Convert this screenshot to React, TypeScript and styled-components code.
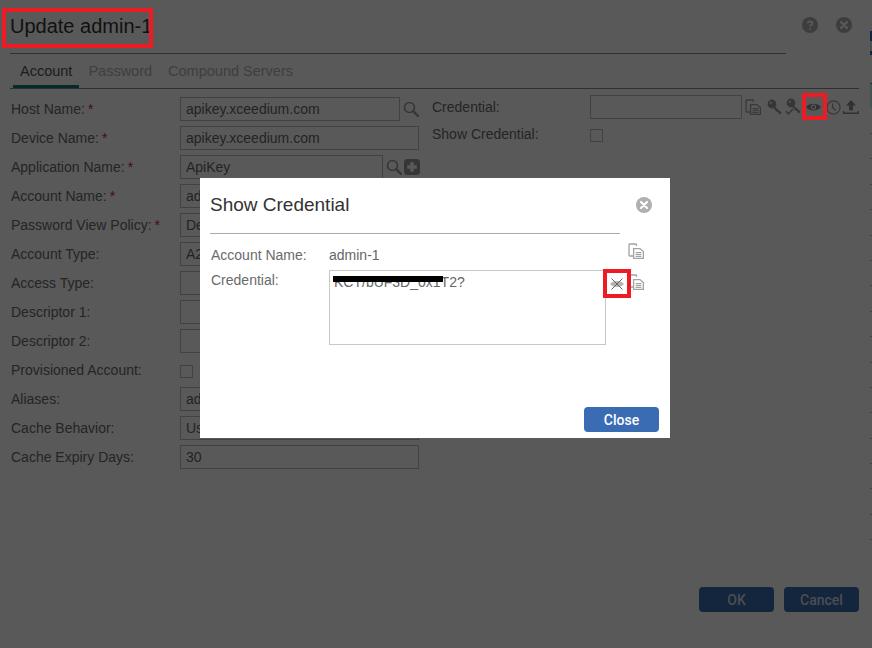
import React from 'react'
import styled, { createGlobalStyle } from 'styled-components'

const GlobalStyle = createGlobalStyle`
  html, body {
    margin: 0;
    padding: 0;
    background: #fff;
  }
  body {
    font-family: "Liberation Sans", Arial, sans-serif;
    font-size: 14px;
    color: #666;
  }
`

const Page = styled.div`
  position: relative;
  display: flex;
  width: 872px;
  height: 648px;
  overflow: hidden;
`

const Dialog = styled.div`
  display: flex;
  flex-direction: column;
  width: 870px;
  height: 648px;
  padding: 0 11px 36px 10px;
  box-sizing: border-box;
`

const EdgeStrip = styled.div`
  display: flex;
  flex-direction: column;
  width: 2px;
  padding-top: 31px;
  box-sizing: border-box;
`

const EdgeButton = styled.div`
  height: 24px;
  background: linear-gradient(#3a6cb3 0 10px, #d6dce6 10px 20px, #3a6cb3 20px);
`

const EdgeTab = styled.div`
  height: 25px;
  margin: 28px 0 25px;
  background: #c4f0ea;
  border-top: 1px solid #777;
  box-sizing: border-box;
`

const EdgeRow = styled.div`
  flex: 0 0 25.4px;
  border-top: 1px solid #c4c4c4;
  box-sizing: border-box;
`

const Header = styled.div`
  display: flex;
  height: 54px;
  flex: none;
`

const TitleBlock = styled.div`
  width: 776px;
  height: 54px;
  border-bottom: 1px solid #8a8a8a;
  box-sizing: border-box;
  padding-top: 15px;
`

const Title = styled.h1`
  position: relative;
  display: inline-block;
  margin: 0;
  font-size: 20px;
  line-height: 23px;
  font-weight: 400;
  color: #333;
`

const TitleMark = styled.span`
  position: absolute;
  left: -8px;
  top: -7px;
  width: 151px;
  height: 40px;
  border: 4px solid #ed1c24;
  box-sizing: border-box;
  z-index: 20;
`

const HeaderIcons = styled.div`
  display: flex;
  gap: 18px;
  margin-left: 16px;
  padding-top: 17px;
`

const TabBar = styled.div`
  display: flex;
  gap: 2px;
  flex: none;
  height: 35px;
  padding-left: 3px;
  border-bottom: 1px solid #8a8a8a;
  box-sizing: border-box;
`

const Tab = styled.div<{ $active?: boolean }>`
  height: 34px;
  padding: 9px 7px 0;
  box-sizing: border-box;
  font-size: 14.5px;
  line-height: 17px;
  color: ${props => props.$active ? '#555' : '#b4b4b4'};
  border-bottom: 3px solid ${props => props.$active ? '#0f7f7c' : 'transparent'};
`

const Columns = styled.div`
  display: flex;
`

const LeftColumn = styled.div`
  display: flex;
  flex-direction: column;
  gap: 5px;
  width: 425px;
  padding: 8px 0 0 1px;
  box-sizing: border-box;
`

const RightColumn = styled.div`
  display: flex;
  flex-direction: column;
  gap: 3px;
  padding-top: 6px;
`

const Row = styled.div`
  display: flex;
  align-items: center;
  height: 24px;
`

const Label = styled.label<{ $width: number }>`
  flex: none;
  width: ${props => props.$width}px;
  font-size: 14px;
  line-height: 16px;
  color: #6a6a6a;
`

const Star = styled.span`
  margin-left: 3px;
  color: #c0272d;
`

const TextField = styled.input<{ $width: number }>`
  flex: none;
  width: ${props => props.$width}px;
  height: 24px;
  padding: 0 5px;
  box-sizing: border-box;
  border: 1px solid #bdbdbd;
  border-radius: 0;
  outline: none;
  background: #fff;
  font-family: inherit;
  font-size: 14px;
  color: #666;
`

const CheckBox = styled.span`
  flex: none;
  width: 13px;
  height: 13px;
  margin-top: 3px;
  border: 1px solid #bdbdbd;
  box-sizing: border-box;
`

const IconGroup = styled.div`
  display: flex;
  align-items: center;
  gap: 2px;
  margin-left: 3px;
`

const EyeHolder = styled.span`
  position: relative;
  display: flex;
  margin: 0 3px;
`

const EyeMark = styled.span`
  position: absolute;
  left: -4px;
  top: -9px;
  width: 25px;
  height: 27px;
  border: 4px solid #ed1c24;
  box-sizing: border-box;
  z-index: 20;
`

const Footer = styled.div`
  display: flex;
  justify-content: flex-end;
  gap: 10px;
  margin-top: auto;
`

const Button = styled.button<{ $muted?: boolean }>`
  width: 75px;
  height: 25px;
  padding: 0;
  border: none;
  border-radius: 4px;
  background: #3a6cb3;
  font-family: Roboto, "Liberation Sans", sans-serif;
  font-size: 14px;
  font-weight: 500;
  color: ${props => props.$muted ? '#d6dce6' : '#fff'};
`

const Overlay = styled.div`
  position: absolute;
  inset: 0;
  z-index: 10;
  padding: 178px 0 0 200px;
  box-sizing: border-box;
  background: rgba(0, 0, 0, 0.65);
`

const Modal = styled.div`
  display: flex;
  flex-direction: column;
  width: 470px;
  height: 260px;
  padding: 0 11px 6px 10px;
  box-sizing: border-box;
  background: #fff;
`

const ModalHeader = styled.div`
  display: flex;
  align-items: flex-start;
  flex: none;
  height: 56px;
`

const ModalTitleBlock = styled.div`
  width: 410px;
  height: 56px;
  padding-top: 16px;
  box-sizing: border-box;
  border-bottom: 1px solid #aaa;
`

const ModalTitle = styled.h2`
  margin: 0;
  font-size: 19px;
  line-height: 22px;
  font-weight: 400;
  color: #333;
`

const ModalClose = styled.span`
  display: flex;
  margin: 19px 0 0 16px;
`

const ModalGrid = styled.div`
  display: grid;
  grid-template-columns: 118px 277px auto;
  grid-template-rows: 24px 75px;
  row-gap: 0;
  margin: 9px 0 0 1px;
`

const ModalLabel = styled.div<{ $top?: boolean }>`
  font-size: 14px;
  line-height: 16px;
  color: #6a6a6a;
  padding-top: ${props => props.$top ? '5px' : '4px'};
`

const ModalValue = styled.div`
  font-size: 14px;
  line-height: 16px;
  padding-top: 4px;
  color: #666;
`

const CopyCell = styled.div`
  display: flex;
  justify-content: flex-end;
  width: 38px;
`

const TextBox = styled.div`
  position: relative;
  height: 75px;
  margin-top: 3px;
  padding: 3px 4px;
  box-sizing: border-box;
  border: 1px solid #c8c8c8;
  font-size: 14px;
  line-height: 16px;
  color: #666;
`

const Redaction = styled.span`
  position: absolute;
  left: 3px;
  top: 5px;
  width: 110px;
  height: 6px;
  background: #000;
`

const CredentialActions = styled.div`
  position: relative;
  display: flex;
  justify-content: flex-end;
  width: 38px;
  height: 20px;
  margin-top: 7px;
`

const CrossMark = styled.span`
  position: absolute;
  left: -3px;
  top: -5px;
  display: flex;
  align-items: center;
  justify-content: center;
  width: 28px;
  height: 29px;
  border: 4px solid #ed1c24;
  box-sizing: border-box;
  background: #fff;
`

const ModalFooter = styled.div`
  display: flex;
  justify-content: flex-end;
  margin-top: auto;
`

const Glyph = styled.svg`
  display: block;
  flex: none;
`

const SearchIcon = () => (
  <Glyph width="16" height="16" viewBox="0 0 16 16">
    <circle cx="6.5" cy="6.5" r="5" fill="none" stroke="#9a9a9a" strokeWidth="1.6" />
    <path d="M10.2 10.2 15 15" stroke="#9a9a9a" strokeWidth="2.4" strokeLinecap="round" />
  </Glyph>
)

const PlusIcon = () => (
  <Glyph width="16" height="16" viewBox="0 0 16 16">
    <rect width="16" height="16" rx="3.5" fill="#9a9a9a" />
    <path d="M8 3.2v9.6M3.2 8h9.6" stroke="#fff" strokeWidth="3.4" />
  </Glyph>
)

const RoundIcon = ({ mark }: { mark: 'help' | 'close' }) => (
  <Glyph width="16" height="16" viewBox="0 0 16 16">
    <circle cx="8" cy="8" r="8" fill="#b0b0b0" />
    {mark === 'close' && <path d="M5 5l6 6M11 5l-6 6" stroke="#fff" strokeWidth="2.2" strokeLinecap="round" />}
    {mark === 'help' && <path d="M5.6 6.2C5.8 3.8 10.4 3.7 10.4 6.2 10.4 7.9 8 7.9 8 9.6M8 11.2v1.8" fill="none" stroke="#fff" strokeWidth="1.8" />}
  </Glyph>
)

const CopyIcon = () => (
  <Glyph width="16" height="16" viewBox="0 0 16 16">
    <path d="M8.5 3V1.8a.8.8 0 0 0-.8-.8H1.8a.8.8 0 0 0-.8.8v10.4a.8.8 0 0 0 .8.8H5" fill="none" stroke="#a3a3a3" strokeWidth="1.3" />
    <path d="M5.6 5.6H12l3.4 3V15.4H5.6Z" fill="#fff" stroke="#a3a3a3" strokeWidth="1.3" />
    <path d="M7.6 9.6h5.8M7.6 11.6h5.8M7.6 13.5h5.8" stroke="#a3a3a3" strokeWidth="1.1" />
  </Glyph>
)

const KeyIcon = () => (
  <Glyph width="16" height="16" viewBox="0 0 16 16">
    <circle cx="5" cy="5" r="4.4" fill="#9a9a9a" />
    <path d="M6 6l8.4 7.6-.6 1.6-2-.6-1-1.6-1.4-.4L5 7.5Z" fill="#9a9a9a" />
    <circle cx="3.8" cy="3.8" r="1" fill="#fff" />
  </Glyph>
)

const KeyCheckIcon = () => (
  <Glyph width="16" height="18" viewBox="0 0 16 18">
    <circle cx="6" cy="5" r="4.4" fill="#9a9a9a" />
    <path d="M7 6l8.4 7.6-.6 1.6-2-.6-1-1.6-1.4-.4L6 7.5Z" fill="#9a9a9a" />
    <circle cx="4.8" cy="3.8" r="1" fill="#fff" />
    <path d="M1 13.2l2.4 2.6L8 11" fill="none" stroke="#9a9a9a" strokeWidth="1.6" />
  </Glyph>
)

const EyeIcon = () => (
  <Glyph width="15" height="10" viewBox="0 0 15 10">
    <path d="M0 5C3 .5 12 .5 15 5 12 9.5 3 9.5 0 5Z" fill="#8c8c8c" />
    <circle cx="7.5" cy="5" r="2.6" fill="#fff" />
    <circle cx="7.5" cy="5" r="1.5" fill="#8c8c8c" />
  </Glyph>
)

const ClockIcon = () => (
  <Glyph width="15" height="15" viewBox="0 0 15 15">
    <circle cx="7.5" cy="7.5" r="6.6" fill="none" stroke="#9a9a9a" strokeWidth="1.2" />
    <path d="M6.6 3.4v4.4l3.4 2.4" fill="none" stroke="#9a9a9a" strokeWidth="1.2" />
  </Glyph>
)

const UploadIcon = () => (
  <Glyph width="16" height="15" viewBox="0 0 16 15">
    <path d="M8 0l5 5.4H10V10.4H6V5.4H3Z" fill="#8c8c8c" />
    <path d="M0 11v3h16v-3h-1.4v1.6H1.4V11Z" fill="#8c8c8c" />
  </Glyph>
)

const CrossedEyeIcon = () => (
  <Glyph width="16" height="14" viewBox="0 0 16 14">
    <path d="M1 7C4 3 12 3 15 7 12 11 4 11 1 7Z" fill="#b4b4b4" />
    <path d="M2.5 1.5l11 11M13.5 1.5l-11 11" stroke="#666" strokeWidth="1" />
  </Glyph>
)

interface IFormRow {
  label: string,
  required?: boolean,
  value?: string,
  width?: number,
  check?: boolean,
  icons?: Array<React.ReactNode>
}

const formRows: Array<IFormRow> = [
  { label: 'Host Name:', required: true, value: 'apikey.xceedium.com', width: 220, icons: [<SearchIcon key="s" />] },
  { label: 'Device Name:', required: true, value: 'apikey.xceedium.com', width: 239 },
  { label: 'Application Name:', required: true, value: 'ApiKey', width: 203, icons: [<SearchIcon key="s" />, <PlusIcon key="p" />] },
  { label: 'Account Name:', required: true, value: 'admin-1', width: 239 },
  { label: 'Password View Policy:', required: true, value: 'Default', width: 239 },
  { label: 'Account Type:', value: 'A2A', width: 239 },
  { label: 'Access Type:', value: '', width: 239 },
  { label: 'Descriptor 1:', value: '', width: 239 },
  { label: 'Descriptor 2:', value: '', width: 239 },
  { label: 'Provisioned Account:', check: true },
  { label: 'Aliases:', value: 'admin-1', width: 239 },
  { label: 'Cache Behavior:', value: 'Use Default', width: 239 },
  { label: 'Cache Expiry Days:', value: '30', width: 239 }
]

const edgeRows = Array.from({ length: 17 }, (_, i) => i)

const renderFormRow = (row: IFormRow) => (
  <Row key={row.label}>
    <Label $width={169}>
      {row.label}
      {row.required && <Star>*</Star>}
    </Label>
    {row.check
      ? <CheckBox />
      : <TextField $width={row.width || 239} value={row.value} readOnly />}
    {row.icons && <IconGroup>{row.icons}</IconGroup>}
  </Row>
)

const App = () => {
  return (
    <Page>
      <GlobalStyle />
      <Dialog>
        <Header>
          <TitleBlock>
            <Title>
              Update admin-1
              <TitleMark />
            </Title>
          </TitleBlock>
          <HeaderIcons>
            <RoundIcon mark="help" />
            <RoundIcon mark="close" />
          </HeaderIcons>
        </Header>
        <TabBar>
          <Tab $active>Account</Tab>
          <Tab>Password</Tab>
          <Tab>Compound Servers</Tab>
        </TabBar>
        <Columns>
          <LeftColumn>{formRows.map(renderFormRow)}</LeftColumn>
          <RightColumn>
            <Row>
              <Label $width={158}>Credential:</Label>
              <TextField $width={152} value="" readOnly />
              <IconGroup>
                <CopyIcon />
                <span style={{ width: 2 }} />
                <KeyIcon />
                <KeyCheckIcon />
                <EyeHolder>
                  <EyeIcon />
                  <EyeMark />
                </EyeHolder>
                <ClockIcon />
                <UploadIcon />
              </IconGroup>
            </Row>
            <Row>
              <Label $width={158}>Show Credential:</Label>
              <CheckBox />
            </Row>
          </RightColumn>
        </Columns>
        <Footer>
          <Button $muted>OK</Button>
          <Button $muted>Cancel</Button>
        </Footer>
      </Dialog>
      <EdgeStrip>
        <EdgeButton />
        <EdgeTab />
        {edgeRows.map(i => <EdgeRow key={i} />)}
      </EdgeStrip>
      <Overlay>
        <Modal>
          <ModalHeader>
            <ModalTitleBlock>
              <ModalTitle>Show Credential</ModalTitle>
            </ModalTitleBlock>
            <ModalClose><RoundIcon mark="close" /></ModalClose>
          </ModalHeader>
          <ModalGrid>
            <ModalLabel>Account Name:</ModalLabel>
            <ModalValue>admin-1</ModalValue>
            <CopyCell><CopyIcon /></CopyCell>
            <ModalLabel $top>Credential:</ModalLabel>
            <TextBox>
              KCT/bUF3D_0x1T2?
              <Redaction />
            </TextBox>
            <CredentialActions>
              <CopyIcon />
              <CrossMark><CrossedEyeIcon /></CrossMark>
            </CredentialActions>
          </ModalGrid>
          <ModalFooter>
            <Button>Close</Button>
          </ModalFooter>
        </Modal>
      </Overlay>
    </Page>
  )
}

export default App
